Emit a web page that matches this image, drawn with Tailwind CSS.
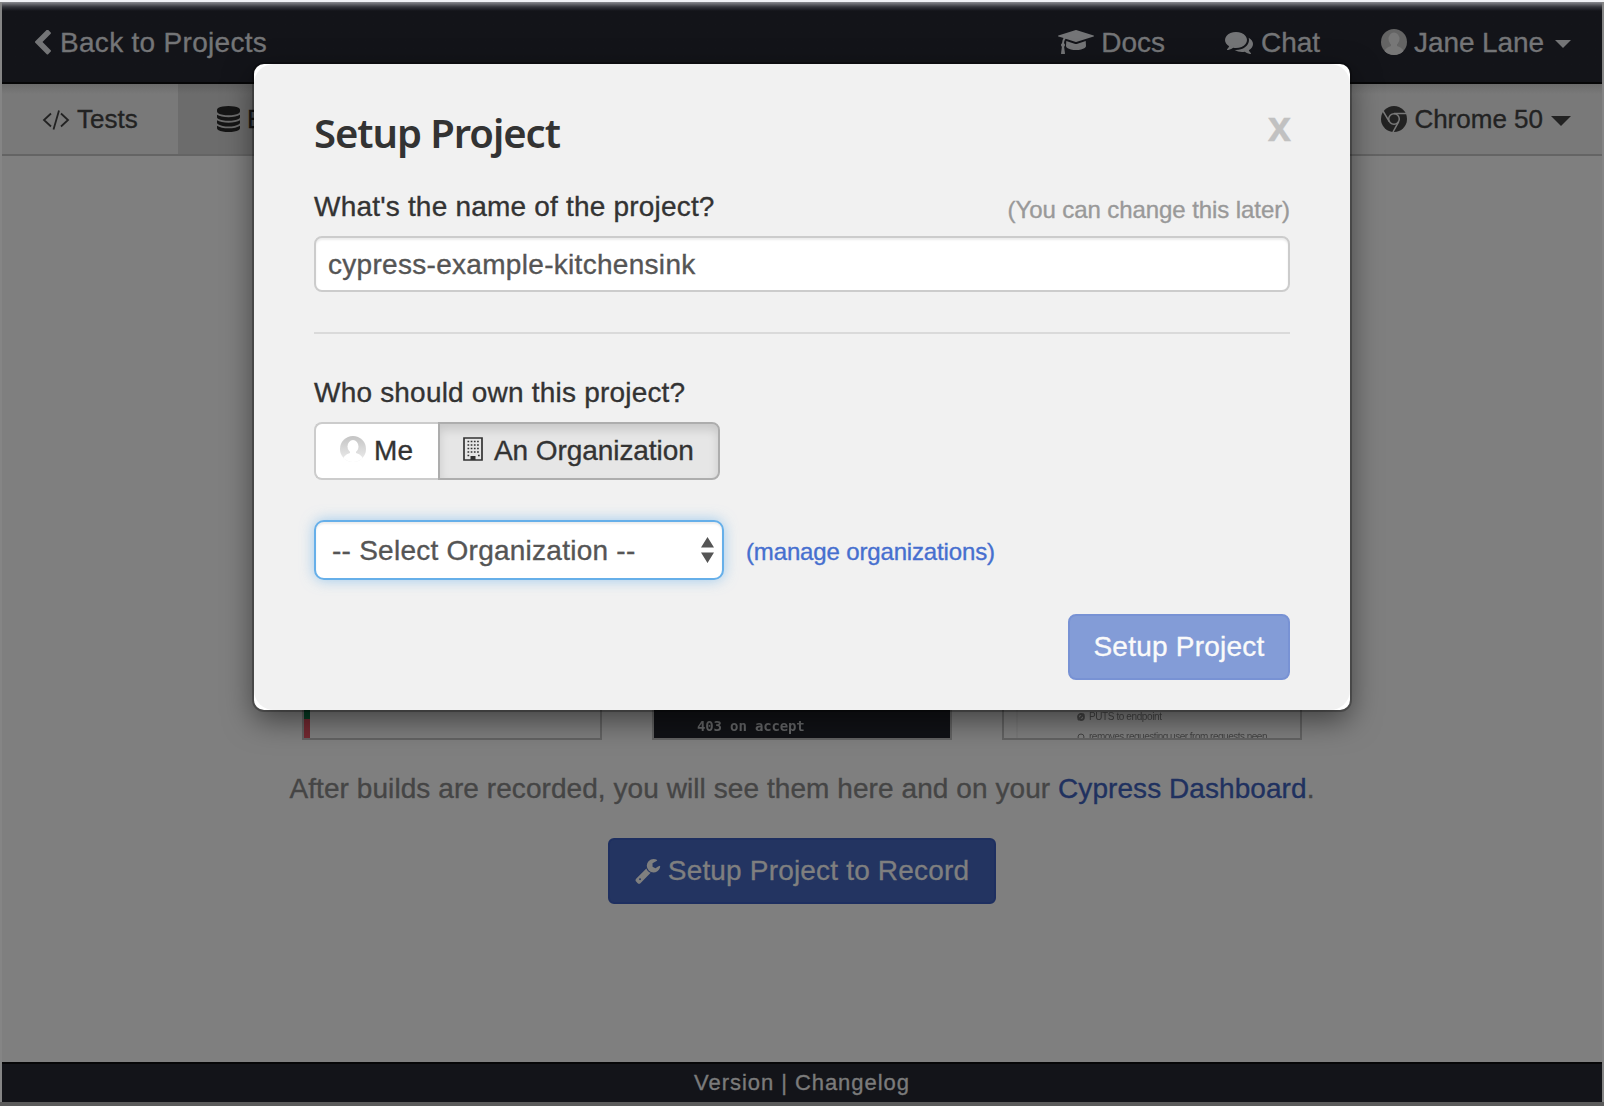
<!DOCTYPE html>
<html lang="en">
<head>
<meta charset="utf-8">
<title>Setup Project</title>
<script src="https://cdn.jsdelivr.net/npm/@tailwindcss/browser@4"></script>
</head>
<body class="relative h-[1106px] w-[1604px] overflow-hidden bg-[#5b5b5b] font-['Liberation_Sans',Arial,sans-serif] text-[28px] leading-10 [-webkit-text-stroke:0.35px]">
<div class="h-0.5 bg-[#f1f2f5]"></div>
<div class="flex h-[1100px] flex-col border-x-2 border-[#858585]">
  <header class="flex h-[82px] shrink-0 items-center justify-between border-b-2 border-[#060607] bg-[#131419] bg-linear-to-b from-[#8b8c91] via-[#33343a] via-[5px] to-[#131419] to-[9px] pr-[31px] pl-[33px] text-[#747577]">
    <a class="flex items-center tracking-[0.3px]">
      <svg class="mr-[9px] h-[25px] w-[16px]" viewBox="410 90 1036 1548" fill="currentColor"><path d="M1427 301l-531 531 531 531q19 19 19 45t-19 45l-166 166q-19 19-45 19t-45-19l-742-742q-19-19-19-45t19-45l742-742q19-19 45-19t45 19l166 166q19 19 19 45t-19 45z"/></svg>
      <span class="pt-0.5">Back to Projects</span>
    </a>
    <nav class="flex items-center">
      <a class="flex items-center">
        <svg class="mr-[7px] h-6 w-9" viewBox="0 128 2304 1536" fill="currentColor"><path d="M1774 836l18 316q4 69-82 128t-235 93.5-323 34.500-323-34.500-235-93.500-82-128l18-316 574 181q22 7 48 7t48-7zM2304 512q0 23-22 31l-1120 352q-4 1-10 1t-10-1l-652-206q-43 34-71 111.500t-34 178.500q63 36 63 109 0 69-58 107l58 433q2 14-8 25-9 11-24 11h-192q-15 0-24-11-10-11-8-25l58-433q-58-38-58-107 0-73 65-111 11-207 98-330l-333-104q-22-8-22-31t22-31l1120-352q4-1 10-1t10 1l1120 352q22 8 22 31z"/></svg>
        <span class="pt-0.5">Docs</span>
      </a>
      <a class="ml-[60px] flex items-center">
        <svg class="mr-2 h-[28px] w-[28px]" viewBox="0 0 1792 1792" fill="currentColor"><path d="M1408 768q0 139-94 257t-256.500 186.500-353.500 68.500q-86 0-176-16-124 88-278 128-36 9-86 16h-3q-11 0-20.500-8t-11.500-21q-1-3-1-6.500t.5-6.500 2-6l2.500-5 3.500-5.500 4-5 4.500-5 4-4.500q5-6 23-25t26-29.500 22.500-29 25-38.500 20.500-44q-124-72-195-177t-71-224q0-139 94-257t256.500-186.500 353.500-68.500 353.500 68.500 256.500 186.500 94 257zm384 256q0 120-71 224.500t-195 176.500q10 24 20.500 44t25 38.500 22.500 29 26 29.500 23 25q1 1 4 4.500t4.500 5 4 5 3.500 5.500l2.500 5 2 6 .5 6.500-1 6.500q-3 14-13 22t-22 7q-50-7-86-16-154-40-278-128-90 16-176 16-271 0-472-132 58 4 88 4 161 0 309-45t264-129q125-92 192-212t67-254q0-77-23-152 129 71 204 178t75 230z"/></svg>
        <span class="pt-0.5">Chat</span>
      </a>
      <a class="ml-[61px] flex items-center tracking-[-0.1px]">
        <svg class="mr-[7px] size-[26px]" viewBox="0 0 26 26"><clipPath id="av1"><circle cx="13" cy="13" r="13"/></clipPath><g clip-path="url(#av1)"><rect width="26" height="26" fill="#646464"/><ellipse cx="13" cy="10" rx="5.500" ry="6.500" fill="#777"/><path d="M2 26Q3 19 10 17V14h6v3q7 2 8 9z" fill="#777"/></g></svg>
        <span class="pt-0.5">Jane Lane</span>
        <svg class="mt-1 ml-[11px] h-2 w-4" viewBox="0 0 16 8" fill="currentColor"><path d="M0 0h16L8 8z"/></svg>
      </a>
    </nav>
  </header>
  <div class="flex h-[72px] shrink-0 border-b-2 border-[#646464] bg-[#797979] bg-linear-to-b from-[#6b6b6b] to-[#797979] to-[10px] text-[26px] text-[#222]">
    <a class="flex h-[70px] w-44 items-center pl-10">
      <svg class="mt-0.5 mr-[7px] h-5 w-[28px]" viewBox="0 0 28 20" fill="none" stroke="currentColor" stroke-width="1.800"><path d="M9 3.500L2 10l7 6.500M19 3.500l7 6.500-7 6.500M17 .5L11.500 19.500"/></svg>
      Tests
    </a>
    <a class="flex h-[70px] w-48 items-center bg-[#6c6c6c] bg-linear-to-b from-[#606060] to-[#6c6c6c] to-[10px] pl-[39px] text-[#151515]">
      <svg class="mr-[7px] h-[26px] w-[23px]" viewBox="128 0 1536 1792" preserveAspectRatio="none" fill="currentColor"><path d="M896 768q237 0 443-43t325-127v170q0 69-103 128t-280 93.500-385 34.500-385-34.500-280-93.500-103-128v-170q119 84 325 127t443 43zm0 768q237 0 443-43t325-127v170q0 69-103 128t-280 93.500-385 34.500-385-34.500-280-93.500-103-128v-170q119 84 325 127t443 43zm0-384q237 0 443-43t325-127v170q0 69-103 128t-280 93.500-385 34.500-385-34.500-280-93.500-103-128v-170q119 84 325 127t443 43zm0-1152q208 0 385 34.500t280 93.500 103 128v128q0 69-103 128t-280 93.500-385 34.500-385-34.500-280-93.500-103-128v-128q0-69 103-128t280-93.500 385-34.500z"/></svg>
      Builds
    </a>
    <a class="ml-auto flex h-[70px] items-center pr-[31px]">
      <svg class="mr-[7px] size-[26px]" viewBox="0 0 26 26"><circle cx="13" cy="13" r="13" fill="#222"/><g fill="none" stroke="#797979" stroke-width="1.500"><circle cx="13" cy="13" r="5.300"/><path d="M13 7.500H25.500M8.300 15.700L2 5M17.700 15.700L12 26"/></g></svg>
      Chrome 50
      <svg class="mt-1 ml-2 h-[10px] w-5" viewBox="0 0 20 10" fill="currentColor"><path d="M0 0h20L10 10z"/></svg>
    </a>
  </div>
  <main class="flex flex-1 flex-col items-center bg-[#7f7f7f]">
    <div class="mt-[384px] flex w-[1000px] gap-[50px]">
      <div class="flex h-[200px] w-[300px] flex-col border-2 border-[#636363]">
        <div class="h-[177px] w-1.5 bg-[#073e25]"></div>
        <div class="w-1.5 flex-1 bg-[#742931]"></div>
      </div>
      <div class="flex h-[200px] w-[300px] items-end border-2 border-[#636363] bg-[#111216] pb-[2px] pl-[43px] font-['DejaVu_Sans_Mono',monospace] text-[14px] leading-5 font-bold tracking-[-0.15px] text-[#656668] [-webkit-text-stroke:0]"><span class="blur-[0.5px]">403 on accept</span></div>
      <div class="flex h-[200px] w-[300px] flex-col justify-end overflow-hidden border-2 border-[#636363] pl-3">
        <div class="-mb-[9px] flex flex-col border-l-2 border-[#7a7a7a] pt-36 pl-[59px] text-[10px] leading-5 text-[#444] blur-[0.5px] [-webkit-text-stroke:0]">
          <div class="flex items-center gap-1"><svg class="size-2" viewBox="0 0 8 8" fill="none" stroke="currentColor" stroke-width="1.800"><circle cx="4" cy="4" r="3"/><path d="M1 7l6-6"/></svg><span class="tracking-[-0.4px]">PUTS to endpoint</span></div>
          <div class="flex items-center gap-1 whitespace-nowrap"><svg class="size-2" viewBox="0 0 8 8" fill="none" stroke="currentColor"><circle cx="4" cy="4" r="3"/></svg><span class="tracking-[-0.5px]">removes requesting user from requests neen</span></div>
        </div>
      </div>
    </div>
    <p class="mt-[29px] whitespace-nowrap tracking-[0.07px] text-[#454545]">After builds are recorded, you will see them here and on your <a class="text-[#20315f]">Cypress Dashboard</a>.</p>
    <button class="mt-[29px] flex h-[66px] w-[388px] items-center justify-center rounded-md border-2 border-[#1e2f60] bg-[#233461] tracking-[0.18px] text-[#7f7f7f]">
      <svg class="mr-[7px] size-[26px]" viewBox="64 64 1700 1728" fill="currentColor"><path d="M448 1472q0-26-19-45t-45-19-45 19-19 45 19 45 45 19 45-19 19-45zm644-420l-682 682q-37 37-90 37-52 0-91-37l-106-108q-38-36-38-90 0-53 38-91l681-681q39 98 114.500 173.500t173.500 114.500zm634-435q0 39-23 106-47 134-164.500 217.500t-258.500 83.500q-185 0-316.500-131.500t-131.500-316.500 131.500-316.500 316.500-131.500q58 0 121.500 16.500t107.500 46.500q16 11 16 28t-16 28l-293 169v224l193 107q5-3 79-48.500t135.500-81 70.500-35.500q15 0 23.500 10t8.500 25z"/></svg>
      Setup Project to Record
    </button>
  </main>
  <footer class="flex h-10 shrink-0 items-center justify-center border-t-2 border-[#060607] bg-[#131419] text-[22px] tracking-[0.95px] text-[#7b7b7b]">Version | Changelog</footer>
</div>

<div class="absolute top-16 left-[254px] h-[646px] w-[1096px] rounded-[10px] bg-white shadow-[0_0_0_2px_rgba(0,0,0,0.25),0_10px_30px_rgba(0,0,0,0.5)]">
  <div class="flex h-full flex-col rounded-[20px] bg-[#f1f1f1] px-[60px] pt-[39px] text-[#333]">
    <div class="flex h-[60px] items-center justify-between">
      <h2 class="font-['Noto_Sans',sans-serif] text-[40px] leading-[60px] font-semibold tracking-[-1.05px] [-webkit-text-stroke:0]">Setup Project</h2>
      <button class="-mt-3 -mr-px text-[42px] font-bold text-[#c1c1c1]">x</button>
    </div>
    <div class="mt-6 flex h-10 items-center justify-between">
      <label class="tracking-[0.2px]">What's the name of the project?</label>
      <span class="pt-1.5 text-[24px] tracking-[-0.08px] text-[#999]">(You can change this later)</span>
    </div>
    <div class="mt-[9px] flex h-14 items-center rounded-lg border-2 border-[#ccc] bg-white pt-0.5 pl-3 tracking-[0.3px] text-[#555] shadow-[inset_0_2px_2px_rgba(0,0,0,0.075)]">cypress-example-kitchensink</div>
    <div class="mt-10 h-0.5 shrink-0 bg-[#dadada]"></div>
    <label class="mt-[39px] tracking-[0.2px]">Who should own this project?</label>
    <div class="mt-[9px] flex h-[58px] w-[406px]">
      <div class="flex w-[124px] items-center rounded-l-lg border-2 border-r-0 border-[#ccc] bg-white pl-6 tracking-[0.3px]">
        <svg class="mr-2 mb-1 size-[26px]" viewBox="0 0 26 26"><defs><clipPath id="av2"><circle cx="13" cy="13" r="13"/></clipPath><linearGradient id="g" x2="0" y2="1"><stop stop-color="#c4c4c4"/><stop offset="1" stop-color="#eee"/></linearGradient></defs><g clip-path="url(#av2)"><rect width="26" height="26" fill="url(#g)"/><ellipse cx="13" cy="10.500" rx="5.500" ry="6.500" fill="#fff"/><path d="M2 26Q3 19 10 17V14h6v3q7 2 8 9z" fill="#fff"/></g></svg>
        Me
      </div>
      <div class="flex flex-1 items-center rounded-r-lg border-2 border-[#adadad] bg-[#e6e6e6] pl-[23px] tracking-[-0.07px] whitespace-nowrap shadow-[inset_0_6px_10px_rgba(0,0,0,0.125)]">
        <svg class="mr-[11px] mb-1 h-6 w-5" viewBox="0 0 20 24"><path d="M1 1h18v22H1z" fill="none" stroke="#333" stroke-width="1.700"/><path d="M4.500 4.500h12M4.500 8h12M4.500 11.500h12M4.500 15h12M4.500 18.500h2M15 18.500h2" stroke="#333" stroke-width="1.700" stroke-dasharray="1.700 1.500"/><path d="M7.500 23v-4h5v4z" fill="#333"/></svg>
        An Organization
      </div>
    </div>
    <div class="mt-10 flex h-[60px] items-center">
      <div class="flex h-full w-[410px] items-center justify-between rounded-[10px] border-2 border-[#66afe9] bg-white pr-2 pl-4 tracking-[0.25px] text-[#555] shadow-[inset_0_2px_2px_rgba(0,0,0,0.075),0_0_14px_rgba(102,175,233,0.6)]">
        <span class="pt-0.5">-- Select Organization --</span>
        <svg class="h-[26px] w-[13px]" viewBox="0 0 13 26" fill="#555"><path d="M0 10.500h13L6.500 0zM0 15.500h13L6.500 26z"/></svg>
      </div>
      <a class="ml-[22px] pt-1 text-[24px] tracking-[-0.15px] text-[#466fcf]">(manage organizations)</a>
    </div>
    <button class="mt-[34px] flex h-[66px] w-[222px] shrink-0 items-center justify-center self-end rounded-lg border-2 border-[#7892d4] bg-[#839cd7] tracking-[0.23px] text-[#fafafa]">Setup Project</button>
  </div>
</div>
</body>
</html>
